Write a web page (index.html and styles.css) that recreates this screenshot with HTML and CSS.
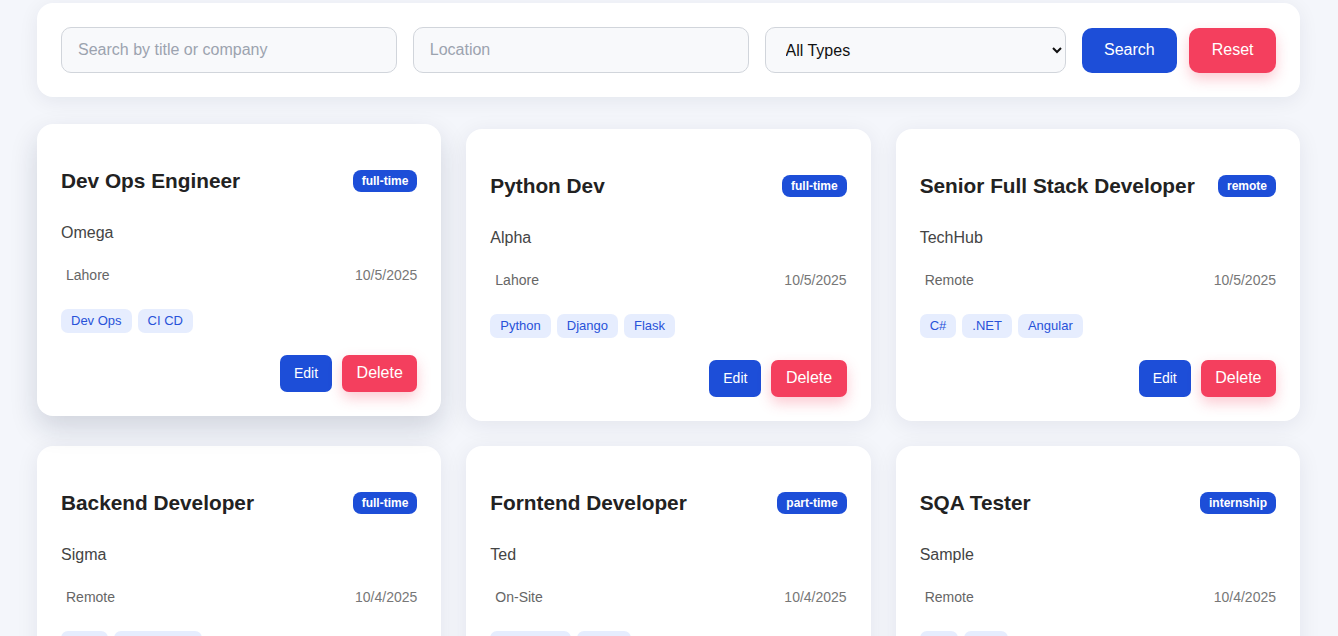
FILE: index.html
```html
<!DOCTYPE html>
<html lang="en">
<head>
<meta charset="utf-8">
<title>Jobs</title>
<link rel="stylesheet" href="styles.css">
</head>
<body>
<main class="page">
  <form class="filters">
    <input class="field field-text" type="text" placeholder="Search by title or company">
    <input class="field field-text" type="text" placeholder="Location">
    <select class="field field-select">
      <option>All Types</option>
      <option>full-time</option>
      <option>part-time</option>
      <option>remote</option>
      <option>internship</option>
    </select>
    <div class="filter-actions">
      <button type="button" class="btn btn-search">Search</button>
      <button type="button" class="btn btn-reset">Reset</button>
    </div>
  </form>

  <section class="grid">
    <article class="card lifted">
      <div class="card-head"><h3 class="title">Dev Ops Engineer</h3><span class="badge">full-time</span></div>
      <p class="company">Omega</p>
      <div class="meta"><span class="loc">Lahore</span><span class="date">10/5/2025</span></div>
      <div class="tags"><span class="tag">Dev Ops</span><span class="tag">CI CD</span></div>
      <div class="actions"><button class="btn-edit">Edit</button><button class="btn-delete">Delete</button></div>
    </article>

    <article class="card">
      <div class="card-head"><h3 class="title">Python Dev</h3><span class="badge">full-time</span></div>
      <p class="company">Alpha</p>
      <div class="meta"><span class="loc">Lahore</span><span class="date">10/5/2025</span></div>
      <div class="tags"><span class="tag">Python</span><span class="tag">Django</span><span class="tag">Flask</span></div>
      <div class="actions"><button class="btn-edit">Edit</button><button class="btn-delete">Delete</button></div>
    </article>

    <article class="card">
      <div class="card-head"><h3 class="title">Senior Full Stack Developer</h3><span class="badge">remote</span></div>
      <p class="company">TechHub</p>
      <div class="meta"><span class="loc">Remote</span><span class="date">10/5/2025</span></div>
      <div class="tags"><span class="tag">C#</span><span class="tag">.NET</span><span class="tag">Angular</span></div>
      <div class="actions"><button class="btn-edit">Edit</button><button class="btn-delete">Delete</button></div>
    </article>

    <article class="card">
      <div class="card-head"><h3 class="title">Backend Developer</h3><span class="badge">full-time</span></div>
      <p class="company">Sigma</p>
      <div class="meta"><span class="loc">Remote</span><span class="date">10/4/2025</span></div>
      <div class="tags"><span class="tag">Java</span><span class="tag">Spring Boot</span></div>
      <div class="actions"><button class="btn-edit">Edit</button><button class="btn-delete">Delete</button></div>
    </article>

    <article class="card">
      <div class="card-head"><h3 class="title">Forntend Developer</h3><span class="badge">part-time</span></div>
      <p class="company">Ted</p>
      <div class="meta"><span class="loc">On-Site</span><span class="date">10/4/2025</span></div>
      <div class="tags"><span class="tag">JavaScript</span><span class="tag">React</span></div>
      <div class="actions"><button class="btn-edit">Edit</button><button class="btn-delete">Delete</button></div>
    </article>

    <article class="card">
      <div class="card-head"><h3 class="title">SQA Tester</h3><span class="badge">internship</span></div>
      <p class="company">Sample</p>
      <div class="meta"><span class="loc">Remote</span><span class="date">10/4/2025</span></div>
      <div class="tags"><span class="tag">QA</span><span class="tag">Test</span></div>
      <div class="actions"><button class="btn-edit">Edit</button><button class="btn-delete">Delete</button></div>
    </article>
  </section>
</main>
</body>
</html>
```

FILE: styles.css
```css
* { box-sizing: border-box; }

html, body {
  margin: 0;
  padding: 0;
  background: #f4f6fb;
  font-family: "Liberation Sans", Arial, sans-serif;
  color: #222;
}

.page {
  width: 1263px;
  margin: 0 0 0 37px;
  padding-top: 3px;
}

.filters {
  display: flex;
  align-items: center;
  gap: 16px;
  margin: 0;
  padding: 24px;
  background: #fff;
  border-radius: 16px;
  box-shadow: 0 4px 20px rgba(20, 30, 60, 0.07);
}

.field {
  height: 46px;
  border: 1px solid #d1d5db;
  border-radius: 10px;
  background: #f8f9fb;
  font-family: "Liberation Sans", Arial, sans-serif;
  font-size: 16px;
  color: #111;
}

.field-text {
  flex: 1 1 0;
  min-width: 0;
  padding: 0 16px;
}

.field-text::placeholder { color: #9ca3af; }

.field-select {
  flex: 0 0 301px;
  width: 301px;
  padding: 0 16px;
}

.filter-actions {
  display: flex;
  gap: 12px;
}

.btn {
  height: 45px;
  border: 0;
  border-radius: 10px;
  color: #fff;
  font-family: "Liberation Sans", Arial, sans-serif;
  font-size: 16px;
  padding: 0 22.5px;
  cursor: pointer;
}

.btn-search { background: #1d4ed8; }

.btn-reset {
  background: #f43f5e;
  box-shadow: 0 6px 14px rgba(244, 63, 94, 0.28);
}

.grid {
  display: grid;
  grid-template-columns: repeat(3, 1fr);
  gap: 25px;
  margin-top: 32px;
}

.card {
  background: #fff;
  border-radius: 16px;
  padding: 45px 24px 24.5px;
  box-shadow: 0 4px 22px rgba(20, 30, 60, 0.08);
}

.card.lifted {
  transform: translateY(-5px);
  box-shadow: 0 12px 28px rgba(20, 30, 60, 0.16);
}

.card-head {
  display: flex;
  justify-content: space-between;
  align-items: center;
}

.title {
  margin: 0;
  font-size: 20.8px;
  line-height: 23px;
  font-weight: 700;
  color: #222;
}

.badge {
  background: #1d4ed8;
  color: #fff;
  font-size: 12px;
  font-weight: 700;
  line-height: 14px;
  padding: 4px 9px;
  border-radius: 8px;
}

.company {
  margin: 32px 0 0;
  font-size: 16px;
  line-height: 18px;
  color: #444;
}

.meta {
  margin-top: 24.5px;
  display: flex;
  justify-content: space-between;
  font-size: 14px;
  line-height: 16px;
}

.loc { color: #666; padding-left: 5px; }
.date { color: #777; }

.tags {
  margin-top: 26px;
  display: flex;
  gap: 6px;
}

.tag {
  background: #e6edfe;
  color: #2852d9;
  font-size: 13px;
  line-height: 16px;
  padding: 4px 10px;
  border-radius: 7px;
}

.actions {
  margin-top: 22px;
  display: flex;
  justify-content: flex-end;
  gap: 10px;
}

.btn-edit,
.btn-delete {
  height: 37px;
  border: 0;
  border-radius: 7px;
  color: #fff;
  font-family: "Liberation Sans", Arial, sans-serif;
  cursor: pointer;
}

.btn-edit {
  background: #1d4ed8;
  font-size: 14px;
  padding: 0 14px;
}

.btn-delete {
  background: #f43f5e;
  font-size: 16px;
  padding: 0 14.5px;
  box-shadow: 0 6px 14px rgba(244, 63, 94, 0.28);
}
```
